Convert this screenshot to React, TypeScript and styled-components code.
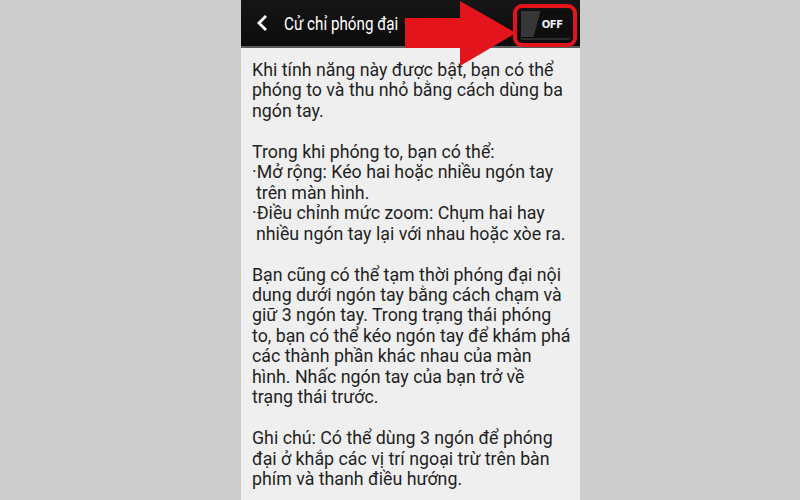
import React from 'react'
import styled, {createGlobalStyle} from 'styled-components'

const GlobalStyle = createGlobalStyle`
  html, body {
    margin: 0;
    padding: 0;
    background: #cdcdcd;
  }
  body {
    font-family: Roboto, "Noto Sans", sans-serif;
  }
`

const Page = styled.div({
  position: 'relative',
  width: 800,
  height: 500,
  overflow: 'hidden',
  paddingLeft: 241,
  boxSizing: 'border-box'
})

const Screen = styled.div({
  width: 339,
  height: 500,
  display: 'flex',
  flexDirection: 'column',
  backgroundColor: '#efefef'
})

const StatusStrip = styled.div({
  height: 4,
  background: '#2c2c2c'
})

const Header = styled.div({
  height: 46,
  display: 'flex',
  alignItems: 'center',
  background: 'linear-gradient(#161616, #0b0b0b)',
  borderBottom: '2px solid #5a5a5a',
  paddingLeft: 14,
  paddingRight: 3
})

const Back = styled.svg({
  width: 14,
  height: 18,
  flexShrink: 0
})

const Title = styled.div({
  marginLeft: 15,
  color: '#fff',
  fontFamily: 'Roboto, sans-serif',
  fontSize: 19,
  whiteSpace: 'nowrap',
  transform: 'scaleX(0.8)',
  transformOrigin: 'left center',
  flex: 1
})

const Highlight = styled.div({
  width: 64,
  height: 43,
  boxSizing: 'border-box',
  border: '4px solid #e3141c',
  borderRadius: 9,
  display: 'flex',
  alignItems: 'center',
  justifyContent: 'center',
  marginTop: 4
})

const Switch = styled.div({
  position: 'relative',
  width: 51,
  height: 30,
  borderRadius: 3,
  background: '#0e0e0e',
  borderBottom: '2px solid #2a2a2a',
  boxSizing: 'border-box',
  overflow: 'hidden',
  display: 'flex',
  justifyContent: 'flex-end',
  alignItems: 'center',
  paddingRight: 8
})

const Thumb = styled.div({
  position: 'absolute',
  left: 1,
  top: 1,
  width: 20,
  height: 26,
  background: '#373737',
  clipPath: 'polygon(0 0, 100% 0, 65% 100%, 0 100%)'
})

const SwitchLabel = styled.span({
  color: '#f2f2f2',
  fontFamily: '"DejaVu Sans", sans-serif',
  fontWeight: 700,
  fontSize: 10,
  letterSpacing: -0.5
})

const Content = styled.div({
  flex: 1,
  padding: '12px 0 0 11px',
  color: '#1f1f1f',
  fontFamily: 'Roboto, sans-serif',
  fontSize: 17.8,
  lineHeight: '20.45px',
  borderBottom: '1px solid #d8d8d8',
  marginBottom: 3
})

const Para = styled.div({
  marginBottom: '20.45px'
})

const Line = styled.div<{$indent?: number}>`
  white-space: nowrap;
  padding-left: ${p => p.$indent || 0}px;
`

const paragraphs: {text: string, indent?: number}[][] = [
  [
    {text: 'Khi tính năng này được bật, bạn có thể'},
    {text: 'phóng to và thu nhỏ bằng cách dùng ba'},
    {text: 'ngón tay.'}
  ],
  [
    {text: 'Trong khi phóng to, bạn có thể:'},
    {text: '·Mở rộng: Kéo hai hoặc nhiều ngón tay'},
    {text: 'trên màn hình.', indent: 4},
    {text: '·Điều chỉnh mức zoom: Chụm hai hay'},
    {text: 'nhiều ngón tay lại với nhau hoặc xòe ra.', indent: 4}
  ],
  [
    {text: 'Bạn cũng có thể tạm thời phóng đại nội'},
    {text: 'dung dưới ngón tay bằng cách chạm và'},
    {text: 'giữ 3 ngón tay. Trong trạng thái phóng'},
    {text: 'to, bạn có thể kéo ngón tay để khám phá'},
    {text: 'các thành phần khác nhau của màn'},
    {text: 'hình. Nhấc ngón tay của bạn trở về'},
    {text: 'trạng thái trước.'}
  ],
  [
    {text: 'Ghi chú: Có thể dùng 3 ngón để phóng'},
    {text: 'đại ở khắp các vị trí ngoại trừ trên bàn'},
    {text: 'phím và thanh điều hướng.'}
  ]
]

const Arrow = styled.svg({
  position: 'absolute',
  left: 0,
  top: 0,
  width: 800,
  height: 500,
  pointerEvents: 'none'
})

export default function App() {
  return (
    <>
      <GlobalStyle />
      <Page>
        <Screen>
          <StatusStrip />
          <Header>
            <Back viewBox="0 0 14 18">
              <path d="M11 2 L4 9 L11 16" fill="none" stroke="#fff" strokeWidth="2.8" />
            </Back>
            <Title>Cử chỉ phóng đại</Title>
            <Highlight>
              <Switch>
                <Thumb />
                <SwitchLabel>OFF</SwitchLabel>
              </Switch>
            </Highlight>
          </Header>
          <Content>
            {paragraphs.map((lines, i) => (
              <Para key={i}>
                {lines.map((l, j) => (
                  <Line key={j} $indent={l.indent}>{l.text}</Line>
                ))}
              </Para>
            ))}
          </Content>
        </Screen>
        <Arrow viewBox="0 0 800 500">
          <polygon points="405,18 460,18 460,1 516,33 460,66 460,48 405,48" fill="#e3141c" />
        </Arrow>
      </Page>
    </>
  )
}
